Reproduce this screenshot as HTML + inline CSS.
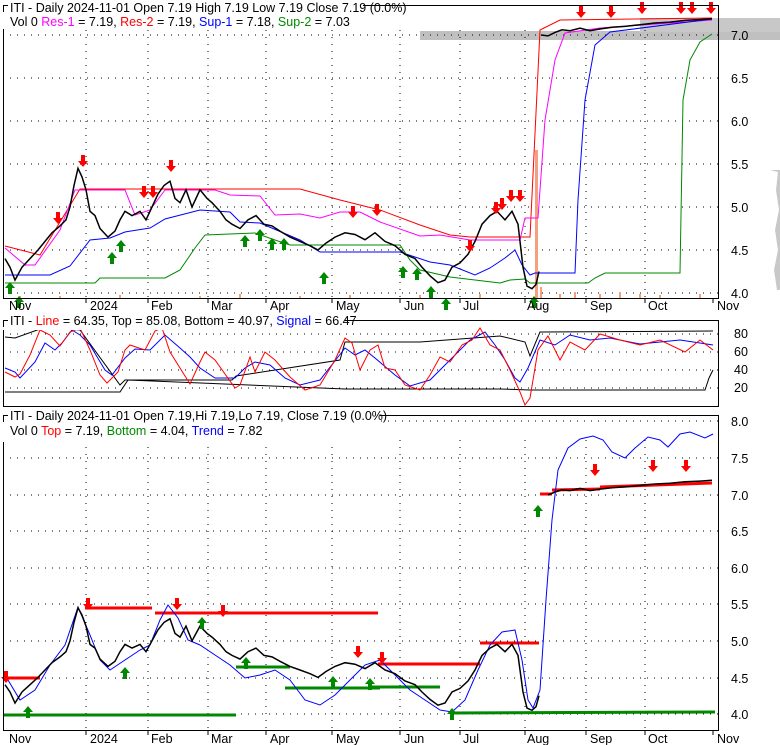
<!DOCTYPE html>
<html><head><meta charset="utf-8"><style>
html,body{margin:0;padding:0;background:#fff;}
svg{display:block;font-family:"Liberation Sans",sans-serif;}
</style></head><body>
<svg width="780" height="745" viewBox="0 0 780 745" xmlns="http://www.w3.org/2000/svg">
<defs>
<path id="dn" d="M-2,-12 h4 v6 h3 l-5,6 l-5,-6 h3 z" fill="#f00"/>
<path id="up" d="M-2,12 h4 v-6 h3 l-5,-6 l-5,6 h3 z" fill="#080"/>
</defs>

<!-- ===== Panel 1 ===== -->
<rect x="420" y="31" width="360" height="9" fill="#c0c0c0"/>
<rect x="640" y="18" width="140" height="14" fill="#c8c8c8"/>
<path d="M770,170 L778,172 L776,190 L779,210 L775,230 L778,250 L774,270 L777,290 L780,290 L780,170 Z" fill="#c8c8c8"/>
<g stroke="#000" stroke-dasharray="1 6" stroke-width="1">
<line x1="3" y1="35" x2="719" y2="35"/><line x1="3" y1="78" x2="719" y2="78"/><line x1="3" y1="121" x2="719" y2="121"/><line x1="3" y1="164" x2="719" y2="164"/><line x1="3" y1="207" x2="719" y2="207"/><line x1="3" y1="250" x2="719" y2="250"/><line x1="3" y1="293" x2="719" y2="293"/>
<line x1="86" y1="30" x2="86" y2="299"/><line x1="148" y1="30" x2="148" y2="299"/><line x1="208" y1="30" x2="208" y2="299"/><line x1="266" y1="30" x2="266" y2="299"/><line x1="332" y1="30" x2="332" y2="299"/><line x1="400" y1="30" x2="400" y2="299"/><line x1="460" y1="30" x2="460" y2="299"/><line x1="525" y1="30" x2="525" y2="299"/><line x1="586" y1="30" x2="586" y2="299"/><line x1="645" y1="30" x2="645" y2="299"/>
</g>
<g fill="#f4a080"><rect x="535" y="150" width="3" height="148"/><rect x="540" y="287" width="2" height="11"/></g>
<path d="M20,298 V296 M60,298 V296 M120,298 V295 M200,298 V296 M240,298 V294 M300,298 V296 M350,298 V295 M420,298 V295 M480,298 V294 M560,298 V294 M575,298 V292 M600,298 V294 M620,298 V292 M640,298 V294 M660,298 V295 M700,298 V294" stroke="#f4a080" stroke-width="2"/>
<polyline fill="none" stroke="#f00" stroke-width="1" points="5,246 40,255 80,189 300,189 340,200 380,210 420,225 450,235 470,237 520,237 530,237 540,30 560,20 712,18"/>
<polyline fill="none" stroke="#f0f" stroke-width="1" points="5,248 25,265 35,265 60,230 75,190 125,190 135,215 150,210 165,190 215,190 230,195 260,196 275,215 300,214 320,218 340,212 360,212 380,222 420,236 440,235 470,240 520,240 525,218 538,218 545,120 555,60 565,33 600,28 712,20"/>
<polyline fill="none" stroke="#00f" stroke-width="1" points="5,275 50,275 70,266 90,240 110,238 125,232 150,228 165,219 200,210 230,212 240,222 260,223 300,240 320,252 400,252 430,262 450,265 475,275 490,268 505,258 515,250 522,265 530,275 535,273 575,273 578,200 585,100 595,45 610,32 712,19"/>
<polyline fill="none" stroke="#080" stroke-width="1" points="5,283 95,283 100,278 165,278 180,270 195,248 205,235 255,233 275,240 290,245 400,245 410,260 420,270 450,277 500,283 510,280 525,279 530,283 588,283 595,278 605,273 680,273 683,100 690,60 700,42 712,34"/>
<polyline fill="none" stroke="#000" stroke-width="1.5" points="5,258.6 10,267.2 15,280.1 22,267.2 30,258.6 38,250 45,241.4 52,232.8 60,225.9 66,219.9 70,207 74,185.5 78,168.3 82,176.9 86,189.8 90,211.3 95,215.6 100,228.5 108,237.1 115,231.1 120,219.9 125,211.3 132,215.6 140,211.3 146,219.9 152,207 158,194.1 164,185.5 170,181.2 175,198.4 180,202.7 186,189.8 192,207 200,189.8 207,198.4 212,202.7 220,211.3 226,219.9 232,224.2 240,228.5 248,219.9 256,215.6 264,224.2 272,225.9 280,231.1 290,237.1 300,241.4 310,245.7 318,250 326,243.1 335,237.1 345,232.8 355,234.5 365,239.7 375,232.8 385,241.4 395,245.7 405,254.3 415,258.6 422,267.2 430,275.8 438,282.7 445,280.1 452,267.2 460,262.9 468,254.3 475,241.4 482,224.2 490,215.6 497,211.3 505,219.9 512,211.3 518,224.2 520,241.4 523,267.2 527,286.1 532,288.7 536,284.4 539,271.5"/>
<polyline fill="none" stroke="#000" stroke-width="1.5" points="541,35 548,35.9 555,32.4 562,29.8 570,30.7 580,28.1 590,30.7 600,29 612,27.3 625,26.4 640,24.7 655,23 670,22.1 685,20.4 700,19.5 712,18.7"/>
<g>
<use href="#dn" x="83" y="167"/><use href="#dn" x="58" y="224"/><use href="#dn" x="144" y="198"/><use href="#dn" x="153" y="198"/><use href="#dn" x="171" y="172"/><use href="#dn" x="353" y="218"/><use href="#dn" x="377" y="216"/><use href="#dn" x="470" y="252"/><use href="#dn" x="496" y="214"/><use href="#dn" x="502" y="210"/><use href="#dn" x="511" y="202"/><use href="#dn" x="520" y="202"/><use href="#dn" x="581" y="18"/><use href="#dn" x="611" y="18"/><use href="#dn" x="642" y="14"/><use href="#dn" x="681" y="14"/><use href="#dn" x="692" y="14"/><use href="#dn" x="711" y="14"/>
<use href="#up" x="10" y="282"/><use href="#up" x="19" y="296"/><use href="#up" x="112" y="252"/><use href="#up" x="121" y="240"/><use href="#up" x="245" y="235"/><use href="#up" x="260" y="229"/><use href="#up" x="272" y="238"/><use href="#up" x="284" y="238"/><use href="#up" x="324" y="272"/><use href="#up" x="403" y="266"/><use href="#up" x="417" y="268"/><use href="#up" x="431" y="286"/><use href="#up" x="446" y="298"/><use href="#up" x="534" y="296"/>
</g>
<rect x="3.5" y="5.5" width="715" height="293" fill="none" stroke="#000"/>
<rect x="3" y="3" width="360" height="26" fill="#fff"/>
<path d="M3.5,12 V5.5 H8" fill="none" stroke="#000"/>
<text x="10" y="12" font-size="12.5">ITI - Daily 2024-11-01 Open 7.19  High 7.19  Low 7.19  Close 7.19 (0.0%)</text>
<text x="10" y="26" font-size="12.5">Vol 0 <tspan fill="#f0f">Res-1</tspan> = 7.19, <tspan fill="#f00">Res-2</tspan> = 7.19, <tspan fill="#00f">Sup-1</tspan> = 7.18, <tspan fill="#080">Sup-2</tspan> = 7.03</text>
<g font-size="12.5" fill="#000">
<text x="731" y="40">7.0</text><text x="731" y="83">6.5</text><text x="731" y="126">6.0</text><text x="731" y="169">5.5</text><text x="731" y="212">5.0</text><text x="731" y="255">4.5</text><text x="731" y="298">4.0</text>
</g>
<g font-size="12.5"><text x="9" y="310">Nov</text><text x="90" y="310">2024</text><text x="151" y="310">Feb</text><text x="211" y="310">Mar</text><text x="270" y="310">Apr</text><text x="336" y="310">May</text><text x="404" y="310">Jun</text><text x="463" y="310">Jul</text><text x="527" y="310">Aug</text><text x="590" y="310">Sep</text><text x="648" y="310">Oct</text><text x="717" y="310">Nov</text></g>
<path d="M86,299v4M148,299v4M208,299v4M266,299v4M332,299v4M400,299v4M460,299v4M525,299v4M586,299v4M645,299v4M713,299v4" stroke="#000"/>

<!-- ===== Panel 2 ===== -->
<g stroke="#000" stroke-dasharray="1 6"><line x1="3" y1="334" x2="719" y2="334"/><line x1="3" y1="352" x2="719" y2="352"/><line x1="3" y1="370" x2="719" y2="370"/><line x1="3" y1="388" x2="719" y2="388"/></g>
<polyline fill="none" stroke="#000" points="5,337 15,338 40,329 70,329 80,330 120,385 125,380 140,380 232,380 236,376 340,360 345,342 420,342 500,336 525,342 530,356 540,332 713,331"/>
<polyline fill="none" stroke="#000" points="5,392 120,392 128,380 345,389 500,389 530,390 540,390 705,390 709,378 713,370"/>
<polyline fill="none" stroke="#00f" points="5,368 15,372 20,378 35,362 45,343 55,350 62,343 72,330 80,335 90,345 105,370 112,375 125,358 135,349 150,350 165,335 180,348 190,357 200,368 215,378 235,378 245,368 255,362 270,365 285,378 300,385 320,380 345,348 355,355 365,350 375,358 395,375 410,386 430,380 445,365 455,355 470,340 485,332 495,345 505,360 515,378 520,382 528,368 540,340 555,345 570,335 590,340 610,338 640,344 660,342 680,340 700,343 713,345"/>
<polyline fill="none" stroke="#f00" points="5,372 15,377 20,374 30,355 40,330 50,335 60,346 70,332 80,328 90,350 100,375 107,383 118,372 125,350 130,345 145,350 155,331 162,328 170,352 185,376 190,384 200,362 205,352 215,360 235,388 240,385 250,357 255,372 265,352 275,360 290,377 305,390 320,385 335,360 345,338 352,343 360,370 370,350 378,345 385,368 395,370 405,385 420,390 430,375 440,357 450,362 462,345 472,340 480,328 490,345 500,350 510,370 520,392 525,405 530,398 538,350 548,336 560,360 570,342 585,350 600,334 620,340 640,345 660,340 685,352 700,340 713,350"/>
<rect x="3.5" y="320.5" width="715" height="86" fill="none" stroke="#000"/>
<rect x="3" y="316" width="342" height="14" fill="#fff"/>
<path d="M3.5,327 V320.5 H8" fill="none" stroke="#000"/>
<text x="10" y="325" font-size="12.5">ITI - <tspan fill="#f00">Line</tspan> = 64.35, Top = 85.08, Bottom = 40.97, <tspan fill="#00f">Signal</tspan> = 66.47</text>
<g font-size="12.5"><text x="734" y="338">80</text><text x="734" y="356">60</text><text x="734" y="374">40</text><text x="734" y="392">20</text></g>

<!-- ===== Panel 3 ===== -->
<g stroke="#000" stroke-dasharray="1 6">
<line x1="3" y1="421" x2="719" y2="421"/><line x1="3" y1="458" x2="719" y2="458"/><line x1="3" y1="495" x2="719" y2="495"/><line x1="3" y1="531" x2="719" y2="531"/><line x1="3" y1="568" x2="719" y2="568"/><line x1="3" y1="604" x2="719" y2="604"/><line x1="3" y1="641" x2="719" y2="641"/><line x1="3" y1="678" x2="719" y2="678"/><line x1="3" y1="714" x2="719" y2="714"/>
<line x1="86" y1="440" x2="86" y2="731"/><line x1="148" y1="440" x2="148" y2="731"/><line x1="208" y1="440" x2="208" y2="731"/><line x1="266" y1="440" x2="266" y2="731"/><line x1="332" y1="440" x2="332" y2="731"/><line x1="400" y1="440" x2="400" y2="731"/><line x1="460" y1="440" x2="460" y2="731"/><line x1="525" y1="440" x2="525" y2="731"/><line x1="586" y1="440" x2="586" y2="731"/><line x1="645" y1="440" x2="645" y2="731"/>
</g>
<g stroke="#f00" stroke-width="3">
<line x1="3" y1="678" x2="40" y2="678"/><line x1="85" y1="608" x2="152" y2="608"/><line x1="155" y1="613" x2="378" y2="613"/><line x1="378" y1="664" x2="480" y2="664"/><line x1="480" y1="643" x2="539" y2="643"/><line x1="540" y1="494" x2="552" y2="494"/><line x1="552" y1="490" x2="600" y2="489"/><line x1="600" y1="487" x2="712" y2="483"/>
</g>
<g stroke="#080" stroke-width="3">
<line x1="3" y1="715" x2="236" y2="715"/><line x1="236" y1="667" x2="290" y2="667"/><line x1="285" y1="688" x2="380" y2="688"/><line x1="370" y1="687" x2="440" y2="687"/><line x1="450" y1="713" x2="715" y2="712"/>
</g>
<polyline fill="none" stroke="#00f" points="5,675 20,700 35,690 50,665 65,645 78,607 90,635 100,660 110,670 125,660 140,650 150,645 160,620 168,605 178,618 188,640 200,645 215,655 230,665 245,678 260,675 275,670 290,680 305,700 320,705 335,695 350,680 365,665 380,660 395,675 410,690 425,700 440,710 452,712 465,700 478,670 490,645 502,632 515,630 522,660 528,700 533,708 540,690 546,600 552,520 558,470 568,448 580,439 593,436 603,440 612,452 625,458 635,448 648,437 660,440 668,447 680,434 690,432 705,438 713,434"/>
<polyline fill="none" stroke="#000" stroke-width="1.5" points="5,684.7 10,692 15,703 22,692 30,684.7 38,677.4 45,670 52,662.7 60,656.9 66,651.7 70,640.8 74,622.4 78,607.8 82,615.1 86,626.1 90,644.4 95,648.1 100,659.1 108,666.4 115,661.3 120,651.7 125,644.4 132,648.1 140,644.4 146,651.7 152,640.8 158,629.8 164,622.4 170,618.8 175,633.4 180,637.1 186,626.1 192,640.8 200,626.1 207,633.4 212,637.1 220,644.4 226,651.7 232,655.4 240,659.1 248,651.7 256,648.1 264,655.4 272,656.9 280,661.3 290,666.4 300,670 310,673.7 318,677.4 326,671.5 335,666.4 345,662.7 355,664.2 365,668.6 375,662.7 385,670 395,673.7 405,681 415,684.7 422,692 430,699.4 438,705.2 445,703 452,692 460,688.4 468,681 475,670 482,655.4 490,648.1 497,644.4 505,651.7 512,644.4 518,655.4 520,670 523,692 527,708.1 532,710.3 536,706.7 539,695.7"/>
<polyline fill="none" stroke="#000" stroke-width="1.5" points="548,495 555,492 562,489.9 570,490.6 580,488.4 590,490.6 600,489.1 612,487.7 625,486.9 640,485.5 655,484 670,483.3 685,481.8 700,481.1 712,480.3"/>
<g>
<use href="#dn" x="6" y="683"/><use href="#dn" x="88" y="610"/><use href="#dn" x="177" y="610"/><use href="#dn" x="223" y="617"/><use href="#dn" x="358" y="658"/><use href="#dn" x="382" y="664"/><use href="#dn" x="595" y="476"/><use href="#dn" x="653" y="472"/><use href="#dn" x="686" y="472"/>
<use href="#up" x="28" y="706"/><use href="#up" x="125" y="667"/><use href="#up" x="202" y="617"/><use href="#up" x="246" y="657"/><use href="#up" x="333" y="676"/><use href="#up" x="370" y="678"/><use href="#up" x="452" y="708"/><use href="#up" x="538" y="505"/>
</g>
<rect x="3.5" y="415.5" width="715" height="315" fill="none" stroke="#000"/>
<rect x="3" y="411" width="377" height="31" fill="#fff"/>
<path d="M3.5,422 V415.5 H8" fill="none" stroke="#000"/>
<text x="10" y="420" font-size="12.5">ITI - Daily 2024-11-01 Open 7.19,Hi 7.19,Lo 7.19, Close 7.19 (0.0%)</text>
<text x="10" y="435" font-size="12.5">Vol 0 <tspan fill="#f00">Top</tspan> = 7.19, <tspan fill="#080">Bottom</tspan> = 4.04, <tspan fill="#00f">Trend</tspan> = 7.82</text>
<g font-size="12.5">
<text x="731" y="426">8.0</text><text x="731" y="463">7.5</text><text x="731" y="500">7.0</text><text x="731" y="536">6.5</text><text x="731" y="573">6.0</text><text x="731" y="609">5.5</text><text x="731" y="646">5.0</text><text x="731" y="683">4.5</text><text x="731" y="719">4.0</text>
</g>
<g font-size="12.5"><text x="9" y="743">Nov</text><text x="90" y="743">2024</text><text x="151" y="743">Feb</text><text x="211" y="743">Mar</text><text x="270" y="743">Apr</text><text x="336" y="743">May</text><text x="404" y="743">Jun</text><text x="463" y="743">Jul</text><text x="527" y="743">Aug</text><text x="590" y="743">Sep</text><text x="648" y="743">Oct</text><text x="717" y="743">Nov</text></g>
<path d="M86,731v4M148,731v4M208,731v4M266,731v4M332,731v4M400,731v4M460,731v4M525,731v4M586,731v4M645,731v4M713,731v4" stroke="#000"/>
</svg>
</body></html>
